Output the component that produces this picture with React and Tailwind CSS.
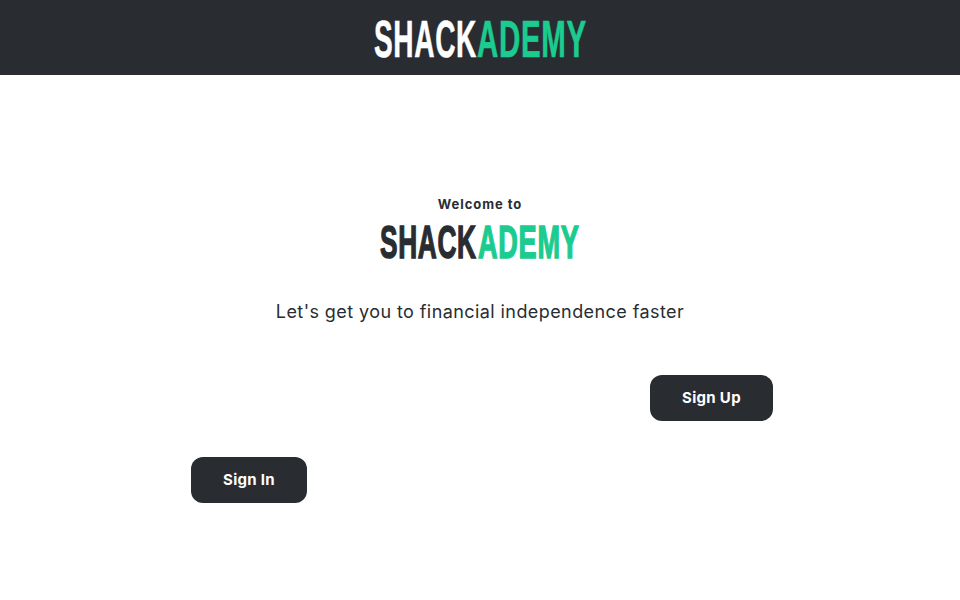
export default function App() {
  const logoFont = "font-['Liberation_Sans',Arial,sans-serif] font-bold whitespace-nowrap tracking-[1.2px]";
  return (
    <div className="min-h-[600px] bg-white font-['Inter','Liberation_Sans',sans-serif] text-[#292d32]">
      <header className="flex h-[75px] items-center justify-center bg-[#292d32] pt-[5px]">
        <div className={`flex h-9 w-[212px] text-[51px] leading-9 ${logoFont}`}>
          <div className="w-[103px]">
            <span className="inline-block origin-left scale-x-[0.55] text-white [-webkit-text-stroke:0.6px_#ffffff]">SHACK</span>
          </div>
          <div className="w-[109px]">
            <span className="inline-block origin-left scale-x-[0.578] text-[#1bcb8f] [-webkit-text-stroke:0.6px_#1bcb8f]">ADEMY</span>
          </div>
        </div>
      </header>
      <main className="flex flex-col items-center pt-[121px]">
        <p className="h-4 text-[13px] leading-4 font-bold tracking-[0.95px]">Welcome to</p>
        <div className={`mt-[13px] flex h-[34px] w-[201px] text-[46px] leading-[34px] ${logoFont}`}>
          <div className="w-[98px]">
            <span className="inline-block origin-left scale-x-[0.57] text-[#292d32] [-webkit-text-stroke:1.5px_#292d32]">SHACK</span>
          </div>
          <div className="w-[103px]">
            <span className="inline-block origin-left scale-x-[0.59] text-[#1bcb8f] [-webkit-text-stroke:1.5px_#1bcb8f]">ADEMY</span>
          </div>
        </div>
        <p className="mt-[41px] text-[18px] leading-6 tracking-[0.42px]">Let's get you to financial independence faster</p>
      </main>
      <section className="mt-[51px] flex flex-col gap-9 pr-[187px] pl-[191px]">
        <div className="flex justify-end">
          <button className="h-[46px] w-[123px] rounded-xl bg-[#292d32] text-[15px] font-bold tracking-[0.3px] text-white">Sign Up</button>
        </div>
        <div className="flex justify-start">
          <button className="h-[46px] w-[116px] rounded-xl bg-[#292d32] text-[15px] font-bold tracking-[0.3px] text-white">Sign In</button>
        </div>
      </section>
    </div>
  );
}
